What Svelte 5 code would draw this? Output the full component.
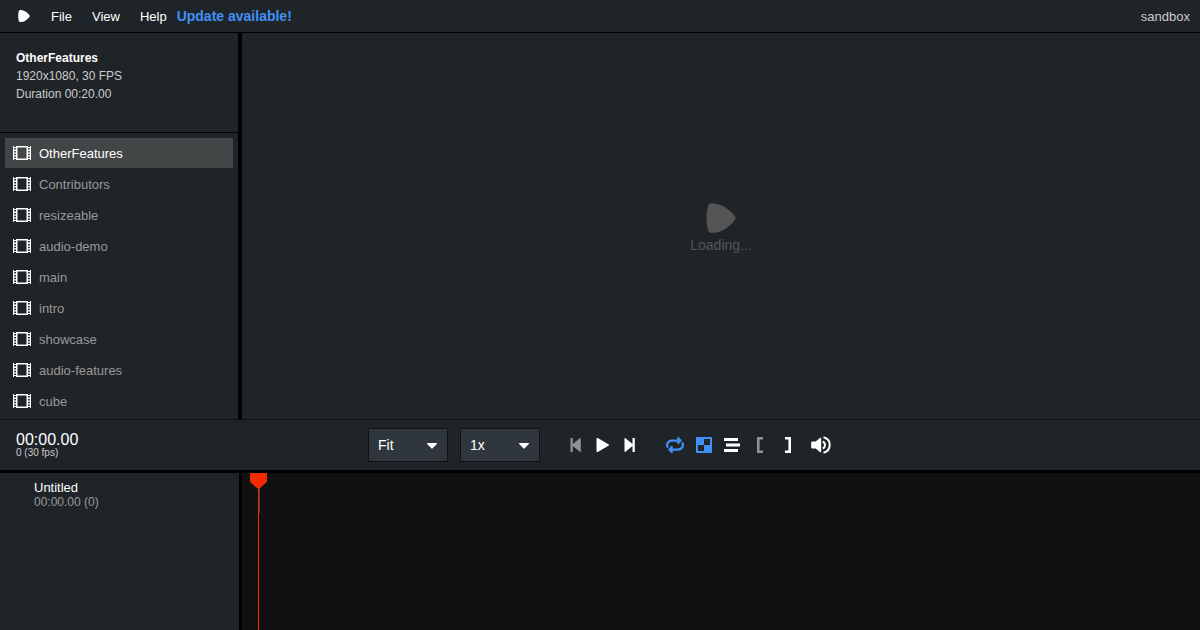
<script lang="ts">
	const compositions = [
		'OtherFeatures',
		'Contributors',
		'resizeable',
		'audio-demo',
		'main',
		'intro',
		'showcase',
		'audio-features',
		'cube'
	];
	const menus = ['File', 'View', 'Help'];

	let selected = $state('OtherFeatures');
	let size = $state('Fit');
	let rate = $state('1x');
	let loop = $state(true);
	let checkerboard = $state(true);
</script>

{#snippet logo(width: number)}
	<svg {width} height={width} viewBox="0 0 30 30" fill="currentColor">
		<path
			d="M4.6 0.3C7.8-0.3 15 1.4 19.5 4.4C24 7.3 28.2 11.7 29.3 14.1C29.7 15 29.6 15.6 29.1 16.5C27.5 19.3 23.5 23.2 19.2 26C14.5 29 8.5 30.3 4.9 29.8C3.7 29.6 3 29 2.5 27.9C1.2 25 0.5 20 0.5 15C0.5 10 1.2 5 2.3 2.3C2.8 1.1 3.5 0.5 4.6 0.3Z"
		/>
	</svg>
{/snippet}

{#snippet caret()}
	<svg class="caret" width="10" height="6" viewBox="0 0 10 6" fill="currentColor">
		<path d="M0.6 0H9.4C10 0 10.2 0.6 9.8 1L5.7 5.3Q5 6 4.3 5.3L0.2 1C-0.2 0.6 0 0 0.6 0Z" />
	</svg>
{/snippet}

<div class="editor">
	<header>
		<button class="menu home" aria-label="Remotion">{@render logo(12)}</button>
		{#each menus as menu}
			<button class="menu">{menu}</button>
		{/each}
		<a class="update" href="#update">Update available!</a>
		<span class="project">sandbox</span>
	</header>

	<div class="top">
		<aside>
			<div class="info">
				<strong>OtherFeatures</strong>
				<div>1920x1080, 30 FPS</div>
				<div>Duration 00:20.00</div>
			</div>
			<nav>
				{#each compositions as name}
					<a
						href="#{name}"
						class:active={selected === name}
						onclick={() => (selected = name)}
					>
						<svg width="18" height="14" viewBox="0 0 18 14" fill="currentColor">
							<path
								fill-rule="evenodd"
								d="M0 0H1V1H3V0H15V1H17V0H18V14H17V13H15V14H3V13H1V14H0ZM4.5 1.5V12.5H13.5V1.5ZM1.2 2V3.5H3V2ZM1.2 5V6.5H3V5ZM1.2 7.8V9.3H3V7.8ZM1.2 10.5V12H3V10.5ZM15 2V3.5H16.8V2ZM15 5V6.5H16.8V5ZM15 7.8V9.3H16.8V7.8ZM15 10.5V12H16.8V10.5Z"
							/>
						</svg>
						{name}
					</a>
				{/each}
			</nav>
		</aside>
		<main>
			{@render logo(30)}
			<div>Loading...</div>
		</main>
	</div>

	<div class="toolbar">
		<div class="time">
			<div class="current">00:00.00</div>
			<div class="frame">0 (30 fps)</div>
		</div>
		<div class="controls">
			<div class="select">
				<select aria-label="Preview size" bind:value={size}>
					<option>Fit</option>
					<option>25%</option>
					<option>50%</option>
					<option>100%</option>
				</select>
				{@render caret()}
			</div>
			<div class="select">
				<select aria-label="Playback rate" bind:value={rate}>
					<option>0.5x</option>
					<option>1x</option>
					<option>2x</option>
				</select>
				{@render caret()}
			</div>
			<div class="transport">
				<button aria-label="Previous frame" disabled>
					<svg width="11" height="14" viewBox="0 0 11 14" fill="currentColor">
						<path d="M0.5 0H2.8V6L9.8 0.2Q10.8 -0.3 10.8 0.8V13.2Q10.8 14.3 9.8 13.8L2.8 8V14H0.5Z" />
					</svg>
				</button>
				<button aria-label="Play">
					<svg width="13" height="14" viewBox="0 0 13 14" fill="currentColor">
						<path d="M0.5 0.8C0.5 0 1.2-0.2 1.8 0.1L12.4 6.2C13 6.6 13 7.4 12.4 7.8L1.8 13.9C1.2 14.2 0.5 14 0.5 13.2Z" />
					</svg>
				</button>
				<button aria-label="Next frame">
					<svg width="11" height="14" viewBox="0 0 11 14" fill="currentColor">
						<path d="M10.8 0H8.5V6L1.5 0.2Q0.5 -0.3 0.5 0.8V13.2Q0.5 14.3 1.5 13.8L8.5 8V14H10.8Z" />
					</svg>
				</button>
			</div>
			<div class="toggles">
				<button
					class="loop"
					class:on={loop}
					aria-label="Loop"
					aria-pressed={loop}
					onclick={() => (loop = !loop)}
				>
					<svg width="18" height="18" viewBox="0 0 512 512" fill="currentColor">
						<path
							d="M493.544 181.463c11.956 22.605 18.655 48.4 18.452 75.75C511.339 345.365 438.56 416 350.404 416H192v47.495c0 22.475-26.177 32.268-40.971 17.475l-80-80c-9.372-9.373-9.372-24.569 0-33.941l80-80C166.138 271.92 192 282.686 192 304v48h158.875c52.812 0 96.575-42.182 97.12-94.992.155-15.045-3.17-29.312-9.217-42.046-4.362-9.185-2.421-20.124 4.8-27.284 4.745-4.706 8.641-8.555 11.876-11.786 11.368-11.352 30.579-9.631 38.09 5.571zM64.005 254.992c.545-52.81 44.308-94.992 97.12-94.992H320v47.505c0 22.374 26.121 32.312 40.971 17.465l80-80c9.372-9.373 9.372-24.569 0-33.941l-80-80C346.014 16.077 320 26.256 320 48.545V96H161.596C73.44 96 .661 166.635.004 254.787c-.204 27.35 6.495 53.145 18.452 75.75 7.511 15.202 26.722 16.923 38.09 5.57 3.234-3.231 7.13-7.08 11.876-11.786 7.22-7.16 9.162-18.098 4.8-27.284-6.046-12.734-9.372-27-9.217-42.045z"
						/>
					</svg>
				</button>
				<button
					class:on={checkerboard}
					aria-label="Checkerboard"
					aria-pressed={checkerboard}
					onclick={() => (checkerboard = !checkerboard)}
				>
					<svg width="16" height="16" viewBox="0 0 16 16" fill="currentColor">
						<path fill-rule="evenodd" d="M1 0H15Q16 0 16 1V15Q16 16 15 16H1Q0 16 0 15V1Q0 0 1 0ZM8 2V8H2V14H8V8H14V2Z" />
					</svg>
				</button>
				<button aria-label="Rich timeline">
					<svg width="16" height="14" viewBox="0 0 16 14" fill="currentColor">
						<path d="M0 0H14V3H0ZM2 5.5H16V8.5H2ZM0 11H14V14H0Z" />
					</svg>
				</button>
				<button class="dim" aria-label="Mark in">
					<svg width="6" height="16" viewBox="0 0 6 16" fill="none" stroke="currentColor" stroke-width="2.6">
						<path d="M6 1.3H1.3V14.7H6" />
					</svg>
				</button>
				<button aria-label="Mark out">
					<svg width="6" height="16" viewBox="0 0 6 16" fill="none" stroke="currentColor" stroke-width="2.6">
						<path d="M0 1.3H4.7V14.7H0" />
					</svg>
				</button>
			</div>
			<button class="volume" aria-label="Mute">
				<svg width="20" height="18" viewBox="0 0 20 18" fill="none" stroke="currentColor" stroke-width="2">
					<path fill="currentColor" stroke="none" d="M1.2 5.5H4.8L8.8 1.9Q10.2 1.2 10.2 2.6V15.4Q10.2 16.8 8.8 16.1L4.8 12.5H1.2Q0.2 12.5 0.2 11.5V6.5Q0.2 5.500 1.2 5.5Z" />
					<path d="M11.8 5.5Q14 6.500 14 9T11.8 12.5M12.5 1.3C16.5 2.3 18.7 5.5 18.7 9S16.5 15.700 12.5 16.7" />
				</svg>
			</button>
		</div>
	</div>

	<div class="timeline">
		<div class="layers">
			<div class="layer">Untitled</div>
			<div class="duration">00:00.00 (0)</div>
		</div>
		<div class="tracks">
			<div class="clip"></div>
			<div class="playhead">
				<svg width="17" height="16" viewBox="0 0 17 16" fill="currentColor">
					<path d="M0 0H17V8Q17 9 16 9.8L9.5 15.5H7.5L1 9.8Q0 9 0 8Z" />
				</svg>
			</div>
		</div>
	</div>
</div>

<style>
	:global(body) {
		margin: 0;
		background: #000;
	}

	.editor {
		display: flex;
		flex-direction: column;
		height: 100vh;
		overflow: hidden;
		background: #1f2428;
		color: #fff;
		font-family: Helvetica, 'Liberation Sans', Arial, sans-serif;
	}

	button {
		display: flex;
		align-items: center;
		justify-content: center;
		padding: 0;
		border: none;
		background: none;
		color: inherit;
		font: inherit;
	}

	svg {
		display: block;
		flex: none;
	}

	header {
		display: flex;
		align-items: center;
		height: 32px;
		padding: 0 10px 0 8px;
		border-bottom: 1px solid #000;
		font-size: 13px;
	}

	.menu {
		height: 32px;
		padding: 0 10px;
	}

	.home {
		margin-right: 1px;
	}

	.update {
		color: #4290f5;
		font-size: 14px;
		font-weight: bold;
		text-decoration: none;
	}

	.project {
		margin-left: auto;
		color: #ccc;
	}

	.top {
		display: flex;
		flex: 386 1 0;
		min-height: 0;
	}

	aside {
		display: flex;
		flex: none;
		flex-direction: column;
		width: 238px;
		border-right: 4px solid #000;
	}

	.info {
		height: 83px;
		padding-top: 16px;
		padding-left: 16px;
		border-bottom: 1px solid #000;
		color: #ccc;
		font-size: 12px;
		line-height: 18px;
	}

	.info strong {
		color: #fff;
	}

	nav {
		display: flex;
		flex: 1;
		flex-direction: column;
		gap: 1px;
		min-height: 0;
		padding: 5px;
		overflow: hidden;
	}

	nav a {
		display: flex;
		flex: none;
		align-items: center;
		gap: 8px;
		height: 30px;
		padding: 0 8px;
		color: #999;
		font-size: 13px;
		text-decoration: none;
	}

	nav a.active {
		background: #424647;
		color: #fff;
	}

	nav svg {
		color: #fff;
	}

	main {
		display: flex;
		flex: 1;
		flex-direction: column;
		align-items: center;
		justify-content: center;
		gap: 4px;
		padding-top: 4px;
		color: #555;
		font-size: 14px;
	}

	.toolbar {
		display: grid;
		grid-template-columns: 1fr auto 1fr;
		align-items: center;
		height: 50px;
		border-top: 1px solid #111;
		border-bottom: 3px solid #000;
	}

	.time {
		padding-left: 16px;
	}

	.current {
		font-size: 16px;
		line-height: 16px;
	}

	.frame {
		color: #ccc;
		font-size: 10px;
		line-height: 10px;
	}

	.controls {
		display: flex;
		align-items: center;
		gap: 12px;
	}

	.select {
		position: relative;
	}

	select {
		display: block;
		width: 80px;
		height: 34px;
		padding: 0 9px;
		border: 1px solid #111;
		border-radius: 0;
		background: #2f363d;
		color: #fff;
		font: inherit;
		font-size: 14px;
		appearance: none;
	}

	.caret {
		position: absolute;
		top: 15px;
		right: 11px;
		pointer-events: none;
	}

	.transport {
		display: flex;
		margin-left: 10px;
	}

	.transport button {
		width: 27px;
		height: 34px;
	}

	.transport button:disabled {
		color: #8f9293;
	}

	.toggles {
		display: flex;
		margin-left: 5px;
	}

	.toggles button {
		width: 28px;
		height: 34px;
	}

	.toggles .loop {
		width: 30px;
	}

	.toggles .on {
		color: #4290f5;
	}

	.dim {
		color: #8f9293;
	}

	.volume {
		width: 22px;
		height: 34px;
		margin-left: -4px;
	}

	.timeline {
		display: flex;
		flex: 157 1 0;
		min-height: 0;
	}

	.layers {
		flex: none;
		box-sizing: border-box;
		width: 242px;
		padding: 7px 0 0 34px;
		border-right: 3px solid #000;
		font-size: 13px;
		line-height: 15px;
	}

	.duration {
		color: #999;
		font-size: 12px;
		line-height: 14px;
	}

	.tracks {
		position: relative;
		flex: 1;
		background: #111;
	}

	/* empty layer, only its edge is visible next to the playhead */
	.clip {
		width: 1px;
		height: 40px;
		margin-left: 17px;
		background: #444;
	}

	.playhead {
		position: absolute;
		top: 0;
		bottom: 0;
		left: 8px;
		width: 17px;
		background: linear-gradient(#f02c00, #f02c00) center / 1px 100% no-repeat;
		color: #f02c00;
	}
</style>
